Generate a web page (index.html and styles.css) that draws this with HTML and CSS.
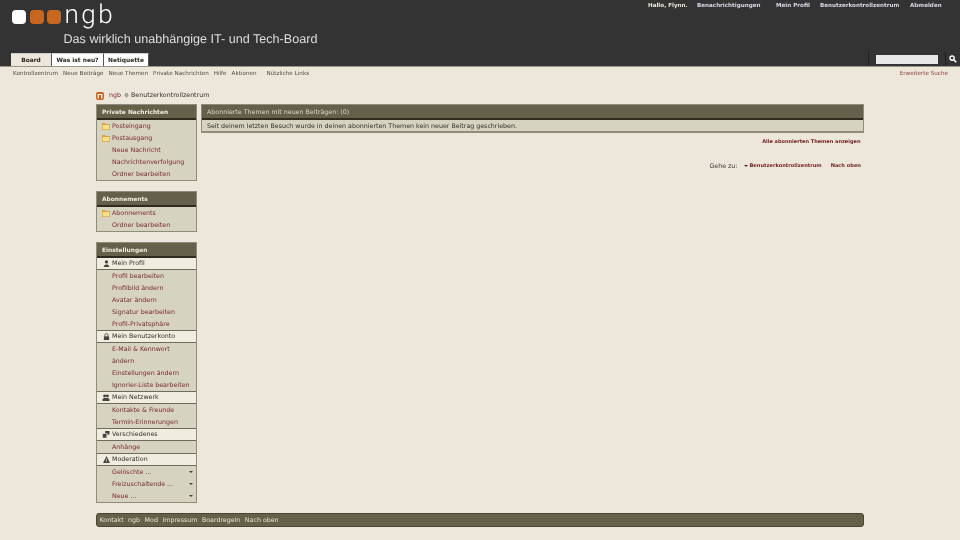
FILE: index.html
```html
<!DOCTYPE html>
<html lang="de">
<head>
<meta charset="utf-8">
<title>ngb</title>
<link rel="stylesheet" href="styles.css">
</head>
<body>
<header class="top">
  <div class="brand-row">
    <div class="brand">
      <div class="logo">
        <span class="dot white"></span><span class="dot orange"></span><span class="dot orange"></span>
        <span class="logo-text">ngb</span>
      </div>
      <div class="tagline">Das wirklich unabhängige IT- und Tech-Board</div>
    </div>
    <nav class="usernav">
      <span class="u1">Hallo, Flynn.</span>
      <a class="u2">Benachrichtigungen</a>
      <a class="u3">Mein Profil</a>
      <a class="u4">Benutzerkontrollzentrum</a>
      <a class="u5">Abmelden</a>
    </nav>
  </div>
  <div class="tab-row">
    <div class="tabs">
      <a class="tab active">Board</a>
      <a class="tab">Was ist neu?</a>
      <a class="tab">Netiquette</a>
    </div>
    <div class="search">
      <input class="search-input" type="text">
      <span class="search-btn">
        <svg width="8" height="8" viewBox="0 0 9 9"><circle cx="3.5" cy="3.5" r="2.4" fill="none" stroke="#fff" stroke-width="1.5"/><path d="M5.3 5.3 8.2 8.2" stroke="#fff" stroke-width="1.8"/></svg>
      </span>
    </div>
  </div>
</header>
<div class="subnav">
  <div class="sublinks">
    <a>Kontrollzentrum</a><a>Neue Beiträge</a><a>Neue Themen</a><a>Private Nachrichten</a><a>Hilfe</a><a>Aktionen</a><a class="gap">Nützliche Links</a>
  </div>
  <a class="adv">Erweiterte Suche</a>
</div>
<div class="page">
  <div class="crumbs">
    <span class="home"><svg width="8" height="8" viewBox="0 0 8 8"><path d="M2.200 6.500V2.500h3.200Q5.800 2.500 5.800 3V6.500" fill="none" stroke="#fff" stroke-width="1.200"/></svg></span>
    <a class="crumb-link">ngb</a>
    <svg class="crumb-sep" width="5" height="6" viewBox="0 0 5 6"><path d="M1 0h3v2h1L2.500 5 0 2h1z" fill="#a8a498"/></svg>
    <span class="crumb-cur">Benutzerkontrollzentrum</span>
  </div>
  <div class="columns">
    <aside class="side">
      <section class="box">
        <h2 class="box-head">Private Nachrichten</h2>
        <ul class="rows">
          <li><svg class="ico" width="8" height="7" viewBox="0 0 8 7"><path d="M0 0h3l1 1h4v6H0z" fill="#d9a441"/><path d="M.7 2h6.600v4.300H.7z" fill="#f6e08e"/></svg><a>Posteingang</a></li>
          <li><svg class="ico" width="8" height="7" viewBox="0 0 8 7"><path d="M0 0h3l1 1h4v6H0z" fill="#d9a441"/><path d="M.7 2h6.600v4.300H.7z" fill="#f6e08e"/></svg><a>Postausgang</a></li>
          <li><a>Neue Nachricht</a></li>
          <li><a>Nachrichtenverfolgung</a></li>
          <li><a>Ordner bearbeiten</a></li>
        </ul>
      </section>
      <section class="box">
        <h2 class="box-head">Abonnements</h2>
        <ul class="rows">
          <li><svg class="ico" width="8" height="7" viewBox="0 0 8 7"><path d="M0 0h3l1 1h4v6H0z" fill="#d9a441"/><path d="M.7 2h6.600v4.300H.7z" fill="#f6e08e"/></svg><a>Abonnements</a></li>
          <li><a>Ordner bearbeiten</a></li>
        </ul>
      </section>
      <section class="box">
        <h2 class="box-head">Einstellungen</h2>
        <div class="sec"><svg class="sec-ico" width="7" height="7" viewBox="0 0 8 8"><circle cx="4" cy="2.200" r="1.900" fill="#444"/><path d="M1 8V6.500L3 5h2l2 1.500V8z" fill="#444"/></svg>Mein Profil</div>
        <ul class="rows">
          <li><a>Profil bearbeiten</a></li>
          <li><a>Profilbild ändern</a></li>
          <li><a>Avatar ändern</a></li>
          <li><a>Signatur bearbeiten</a></li>
          <li><a>Profil-Privatsphäre</a></li>
        </ul>
        <div class="sec"><svg class="sec-ico" width="7" height="7" viewBox="0 0 8 8"><path d="M2.200 4V2.500a1.800 1.800 0 0 1 3.600 0V4" fill="none" stroke="#444" stroke-width="1"/><rect x="1" y="3.800" width="6" height="4.200" fill="#444"/></svg>Mein Benutzerkonto</div>
        <ul class="rows">
          <li><a>E-Mail &amp; Kennwort</a></li>
          <li><a>ändern</a></li>
          <li><a>Einstellungen ändern</a></li>
          <li><a>Ignorier-Liste bearbeiten</a></li>
        </ul>
        <div class="sec"><svg class="sec-ico wide" width="8" height="7" viewBox="0 0 8 8"><circle cx="2.400" cy="2.400" r="1.700" fill="#444"/><circle cx="5.600" cy="2.400" r="1.700" fill="#444"/><path d="M0 8V6l1.500-1.500h5L8 6v2z" fill="#444"/></svg>Mein Netzwerk</div>
        <ul class="rows">
          <li><a>Kontakte &amp; Freunde</a></li>
          <li><a>Termin-Erinnerungen</a></li>
        </ul>
        <div class="sec"><svg class="sec-ico wide" width="8" height="7" viewBox="0 0 8 8"><rect x="3" y="0" width="5" height="4" fill="#444"/><rect x="0" y="3" width="5" height="5" fill="#444" stroke="#f1ece0" stroke-width=".6"/></svg>Verschiedenes</div>
        <ul class="rows">
          <li><a>Anhänge</a></li>
        </ul>
        <div class="sec"><svg class="sec-ico" width="7" height="7" viewBox="0 0 8 8"><path d="M4 0 8 8H0z" fill="#444"/><path d="M3.600 3h.8v2.500h-.8zM3.600 6h.8v.9h-.8z" fill="#f1ece0"/></svg>Moderation</div>
        <ul class="rows">
          <li class="more"><a>Gelöschte ...</a><i class="caret"></i></li>
          <li class="more"><a>Freizuschaltende ...</a><i class="caret"></i></li>
          <li class="more"><a>Neue ...</a><i class="caret"></i></li>
        </ul>
      </section>
    </aside>
    <main class="content">
      <section class="panel">
        <h2 class="panel-head">Abonnierte Themen mit neuen Beiträgen: (0)</h2>
        <p class="panel-body">Seit deinem letzten Besuch wurde in deinen abonnierten Themen kein neuer Beitrag geschrieben.</p>
      </section>
      <div class="all"><a>Alle abonnierten Themen anzeigen</a></div>
      <div class="goto">
        <span class="goto-label">Gehe zu:</span>
        <i class="caret small"></i><a class="goto-a">Benutzerkontrollzentrum</a>
        <a class="goto-b">Nach oben</a>
      </div>
    </main>
  </div>
  <footer class="foot">
    <a>Kontakt</a><a>ngb</a><a>Mod</a><a>Impressum</a><a>Boardregeln</a><a>Nach oben</a>
  </footer>
</div>
</body>
</html>
```
FILE: styles.css
```css
* { box-sizing: border-box; }
html, body { margin: 0; padding: 0; }
html { background: #ede6da; }
body {
  width: 960px;
  height: 540px;
  overflow: hidden;
  background: #ede6da;
  font-family: "DejaVu Sans", Verdana, sans-serif;
  font-size: 6.3px;
  color: #3a3a30;
  text-rendering: geometricPrecision;
  filter: blur(.3px);
}
a { color: inherit; text-decoration: none; }
ul { list-style: none; margin: 0; padding: 0; }
h2, p { margin: 0; }

.top {
  height: 67px;
  background: #333333;
  border-bottom: 1px solid #9b968a;
  display: flex;
  flex-direction: column;
  justify-content: space-between;
}
.brand-row { display: flex; justify-content: space-between; }
.brand { padding-left: 12px; }
.logo { display: flex; align-items: flex-start; height: 29px; }
.dot { width: 14px; height: 14px; border-radius: 4px; margin: 10px 3.500px 0 0; }
.white { background: #ffffff; }
.orange { background: #c8661f; }
.logo-text {
  font-family: Roboto, Lato, sans-serif;
  font-size: 26px;
  font-weight: 300;
  line-height: 31px;
  color: #ffffff;
  letter-spacing: 2.500px;
}
.tagline {
  font-family: "Liberation Sans", Arial, sans-serif;
  font-size: 12.600px;
  line-height: 14px;
  color: #dedede;
  margin: 3px 0 0 51.500px;
}
.usernav {
  position: relative;
  width: 320px;
  height: 12px;
  font-weight: 700;
  font-size: 5.600px;
  color: #d9d9e6;
}
.usernav > * { position: absolute; top: 2px; line-height: 8px; white-space: nowrap; }
.u1 { left: 8px; color: #ede6da; }
.u2 { left: 57px; }
.u3 { left: 136px; }
.u4 { left: 180px; }
.u5 { left: 270px; }

.tab-row { display: flex; justify-content: space-between; align-items: flex-end; height: 14px; }
.tabs { display: flex; padding-left: 11px; }
.tab {
  height: 13px;
  line-height: 14px;
  background: #fff;
  color: #26261e;
  font-weight: 700;
  font-size: 5.900px;
  text-align: center;
  border-right: 1px solid #555;
  border-top: 1px solid #ccc;
}
.tab.active { background: #ede6da; width: 41px; }
.tab:nth-child(2) { width: 52px; }
.tab:nth-child(3) { width: 45px; }

.search { display: flex; align-items: center; height: 14px; border-left: 1px solid #1f1f1f; width: 92px; padding-left: 7px; }
.search-input {
  width: 62px;
  height: 9px;
  padding: 0;
  border: 0;
  background: #e8e8e8;
}
.search-btn { margin-left: 7px; border-left: 1px solid #1f1f1f; height: 14px; display: flex; align-items: center; padding-left: 3px; }

.subnav {
  display: flex;
  justify-content: space-between;
  height: 13px;
  align-items: center;
  padding: 0 12px 0 13px;
  color: #4a4a3c;
  font-size: 5.650px;
}
.sublinks { display: flex; gap: 5px; }
.sublinks .gap { margin-left: 5px; }
.adv { color: #8a3a3a; }

.page { padding: 0 96px; }
.crumbs { display: flex; align-items: center; height: 11px; margin-top: 10px; font-size: 6.300px; color: #2f2f26; }
.home {
  width: 8px; height: 8px; border-radius: 2px; background: #c8661f;
  display: flex; margin-right: 5px; overflow: hidden;
}
.crumb-link { color: #7a2a2a; }
.crumb-sep { margin: 1px 2.500px 0 2.500px; }

.columns { display: flex; gap: 4px; margin-top: 3px; }
.side { width: 101px; flex: none; }
.box {
  border: 1px solid #8f8c7c;
  background: #d6d3c1;
  margin-bottom: 10px;
}
.box-head {
  height: 15px;
  background: #65604a;
  border-bottom: 2px solid #2e2b1e;
  color: #f1ece0;
  font-size: 5.900px;
  font-weight: 700;
  line-height: 16px;
  padding-left: 5px;
}
.rows { padding-left: 15px; }
.rows li { height: 12px; line-height: 13.500px; position: relative; color: #7a2a2a; white-space: nowrap; }
.ico { position: absolute; left: -10px; top: 3px; }
.sec {
  height: 13px;
  line-height: 12px;
  background: #f1ece0;
  border-top: 1px solid #6e6b5c;
  border-bottom: 1px solid #6e6b5c;
  color: #2f2f26;
  padding-left: 15px;
  position: relative;
}
.box-head + .sec { border-top: 0; height: 12px; line-height: 12px; }
.sec-ico { position: absolute; left: 6px; top: 2px; }
.sec-ico.wide { left: 5px; }
.caret {
  display: inline-block;
  width: 0; height: 0;
  border-left: 2px solid transparent;
  border-right: 2px solid transparent;
  border-top: 2.500px solid #44423a;
}
.more .caret { position: absolute; right: 3px; top: 5px; }

.content { flex: 1; }
.panel { border: 1px solid #8f8c7c; border-bottom-width: 2px; background: #d6d3c1; }
.panel-head {
  height: 15px;
  background: #65604a;
  border-bottom: 2px solid #2e2b1e;
  color: #dcd8c8;
  font-size: 6.300px;
  font-weight: 400;
  line-height: 15px;
  padding-left: 5px;
}
.panel-body { height: 11px; line-height: 13px; padding-left: 5px; color: #2f2f26; }
.all { text-align: right; margin-top: 4px; height: 10px; line-height: 10px; font-weight: 700; font-size: 5px; color: #6e1f1f; padding-right: 3.500px; }
.goto { display: flex; justify-content: flex-end; align-items: center; height: 10px; margin-top: 14px; padding-right: 3px; font-size: 6.300px; }
.goto-label { color: #3a3a30; margin-right: 7px; }
.caret.small { margin-right: 1px; border-top-color: #6e1f1f; }
.goto-a, .goto-b { font-weight: 700; font-size: 5.100px; color: #6e1f1f; }
.goto-b { margin-left: 9px; }

.foot {
  display: flex;
  gap: 4.500px;
  height: 14px;
  line-height: 14px;
  align-items: center;
  padding: 1px 0 0 2.500px;
  background: #65604a;
  border: 1px solid #4a4636;
  border-radius: 3px;
  color: #e8e4d4;
}
```
